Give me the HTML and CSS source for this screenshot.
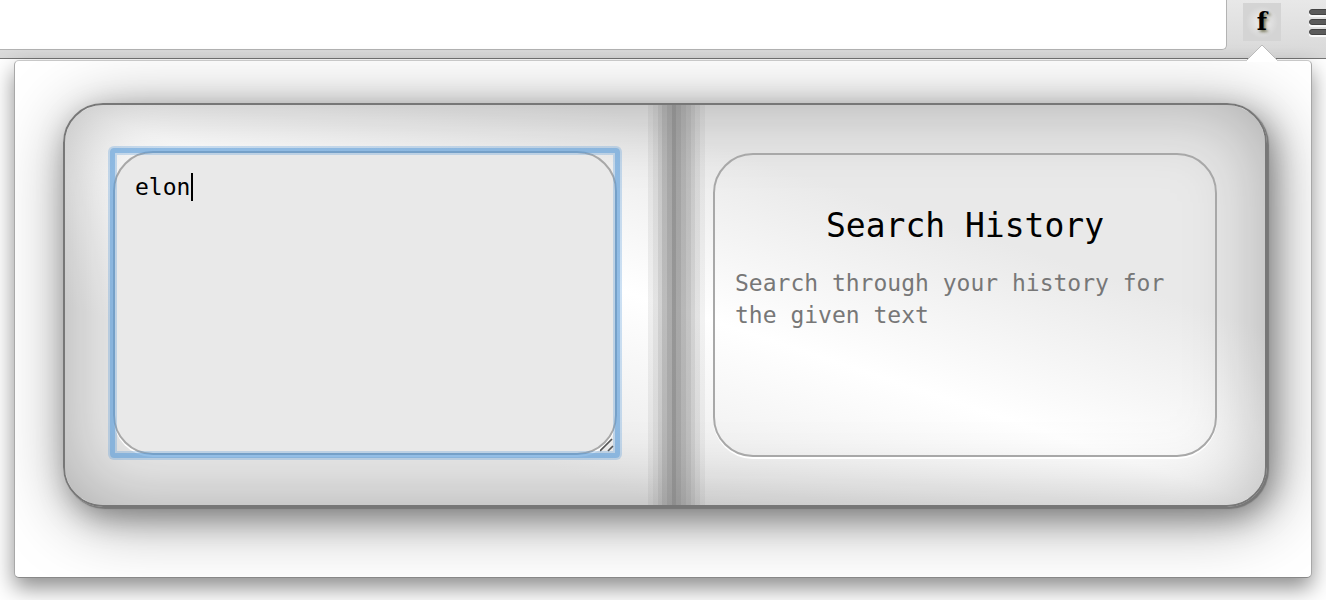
FILE: index.html
```html
<!DOCTYPE html>
<html lang="en">
<head>
<meta charset="utf-8">
<title>Search History</title>
<link rel="stylesheet" href="styles.css">
</head>
<body>
<header class="toolbar">
  <input class="address" type="text" aria-label="Address">
  <button class="extension" type="button" aria-label="Open extension">f</button>
  <button class="menu" type="button" aria-label="Menu">
    <svg width="24" height="28" viewBox="0 0 24 28" aria-hidden="true">
      <g fill="#fafafa"><rect y="1" width="26" height="7" rx="3"/><rect y="11" width="26" height="7" rx="3"/><rect y="21" width="26" height="7" rx="3"/></g>
      <g fill="#5b5b5b" stroke="#444" stroke-width="1"><rect x=".5" y=".5" width="26" height="5" rx="2.5"/><rect x=".5" y="10.500" width="26" height="5" rx="2.5"/><rect x=".5" y="20.500" width="26" height="5" rx="2.5"/></g>
    </svg>
  </button>
</header>
<div class="popup-wrap">
  <svg class="arrow" width="32" height="18" viewBox="0 0 32 18" aria-hidden="true">
    <path d="M1 16 L16 1 L31 16 V18 H1Z" fill="#fff"/>
    <path d="M1 16 L16 1 L31 16" fill="none" stroke="#bbb"/>
  </svg>
  <main class="popup">
    <div class="book">
      <section class="page page-left">
        <div class="field">
          <textarea class="query" aria-label="Search text" spellcheck="false">elon</textarea>
          <span class="caret"></span>
          <svg class="grip" width="14" height="14" viewBox="0 0 14 14" aria-hidden="true">
            <path d="M0 13 L12 1 M8 13 L13 8" stroke="#555" stroke-width="1.700"/>
          </svg>
        </div>
      </section>
      <div class="spine"></div>
      <section class="page page-right">
        <div class="card">
          <h1 class="title">Search History</h1>
          <p class="description">Search through your history for the given text</p>
        </div>
      </section>
    </div>
  </main>
</div>
</body>
</html>
```
FILE: styles.css
```css
* { box-sizing: border-box; }

body {
  margin: 0;
  min-height: 100vh;
  overflow: hidden;
  background: #fff;
  font-family: "DejaVu Sans Mono", monospace;
}

.toolbar {
  display: flex;
  align-items: flex-start;
  height: 59px;
  background: linear-gradient(#e8e8e8, #d8d8d8);
  border-bottom: 1px solid #757575;
}

.address {
  flex: 1;
  min-width: 0;
  height: 50px;
  padding: 0 16px;
  background: #fff;
  border: 1px solid #b3b3b3;
  border-width: 0 1px 1px 0;
  border-radius: 0 0 5px 0;
  outline: none;
}

.extension {
  width: 38px;
  height: 38px;
  margin: 3px 28px 0 16px;
  padding: 0;
  background: radial-gradient(#e6e6e6 20%, #d4d4d4 60%);
  border: 0;
  color: #000;
  font: bold 24px/38px "DejaVu Serif", serif;
  text-shadow: 2px 2px 3px #78785a;
}

.menu {
  width: 17px;
  margin: 9px 0 0;
  padding: 0;
  overflow: hidden;
  background: none;
  border: 0;
}

.menu svg { display: block; }

.popup-wrap {
  position: relative;
  padding: 1px 14px 0;
}

.arrow {
  position: absolute;
  z-index: 1;
  top: -15px;
  right: 48px;
}

.popup {
  overflow: hidden;
  padding: 42px 44px 70px 48px;
  background: #fff;
  border: 1px solid #a8a8a8;
  border-top-color: #c8c8c8;
  border-bottom-color: #888;
  border-radius: 5px;
  box-shadow: 0 10px 22px rgba(0, 0, 0, .45);
}

.book {
  display: grid;
  grid-template-columns: 583fr 57px 560fr;
  border: 2px solid #777;
  border-radius: 40px;
  background: linear-gradient(to top right, #e9e9e9 25%, #fff 50%, #e9e9e9 72%) padding-box;
  box-shadow:
    inset 0 0 80px rgba(0, 0, 0, .27),
    2px 2px 1px #777,
    6px 10px 30px rgba(0, 0, 0, .35),
    6px 10px 70px rgba(0, 0, 0, .4);
}

.page-left { padding: 46px 31px 50px 48px; }
.page-right { padding: 48px 48px 48px 8px; }

.spine {
  background: linear-gradient(to right,
    rgba(128, 128, 128, .12) 8%,
    rgba(128, 128, 128, .22) 8% 17%,
    rgba(128, 128, 128, .36) 17% 25%,
    rgba(128, 128, 128, .52) 25% 33%,
    rgba(128, 128, 128, .65) 33% 42%,
    rgba(128, 128, 128, .82) 42% 50%,
    rgba(128, 128, 128, .68) 50% 58%,
    rgba(128, 128, 128, .56) 58% 67%,
    rgba(128, 128, 128, .46) 67% 75%,
    rgba(128, 128, 128, .34) 75% 83%,
    rgba(128, 128, 128, .22) 83% 92%,
    rgba(128, 128, 128, .1) 92%);
}

.field {
  position: relative;
  font-size: 23px;
  line-height: 32px;
}

.query {
  display: block;
  width: 100%;
  height: 304px;
  padding: 18px 20px;
  background: #e9e9e9;
  border: 2px solid #a8a8a8;
  border-radius: 40px;
  box-shadow: 0 2px 0 #fff;
  color: #000;
  font: inherit;
  outline: none;
  resize: none;
}

/* Focus ring */
.field::after {
  content: "";
  position: absolute;
  inset: -3px;
  border: 5px solid rgba(91, 157, 217, .66);
  border-radius: 4px;
  box-shadow:
    0 0 0 2px rgba(91, 157, 217, .3),
    inset 0 0 0 2px rgba(91, 157, 217, .3);
  pointer-events: none;
}

.caret {
  position: absolute;
  top: 22px;
  left: calc(23px + 4ch);
  width: 2px;
  height: 28px;
  background: #000;
}

.grip {
  position: absolute;
  right: 3px;
  bottom: 3px;
  pointer-events: none;
}

.card {
  min-height: 304px;
  padding: 51px 20px 20px;
  border: 2px solid #a8a8a8;
  border-radius: 40px;
  box-shadow: 0 2px 0 #fff;
}

.title {
  margin: 0 0 21px;
  color: #000;
  font-size: 33px;
  font-weight: normal;
  line-height: 40px;
  text-align: center;
}

.description {
  margin: 0;
  color: #777;
  font-size: 23px;
  line-height: 32px;
}
```
